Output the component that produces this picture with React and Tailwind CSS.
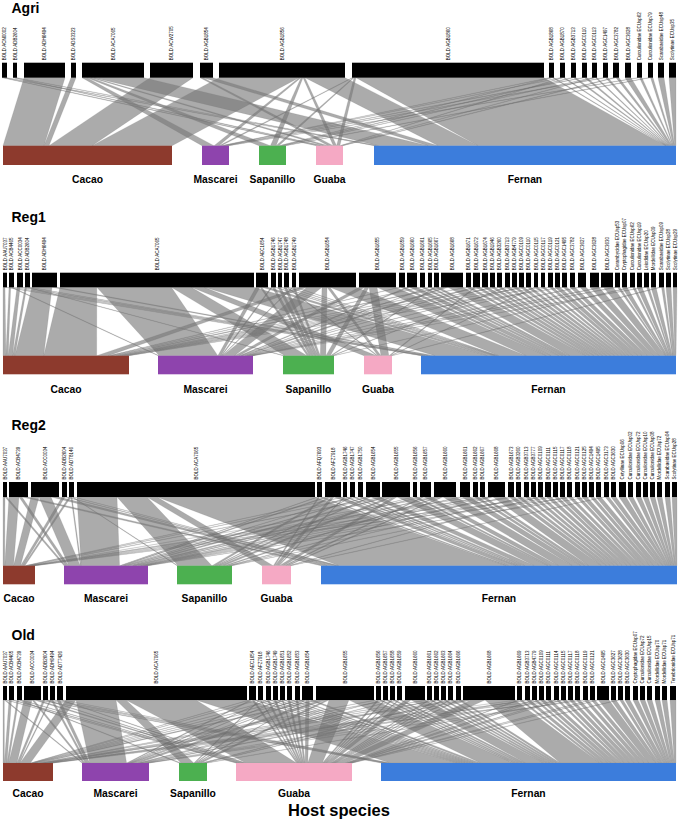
import React from "react";

const HOSTS = ["Cacao", "Mascarei", "Sapanillo", "Guaba", "Fernan"];
const HOST_COLORS = ["#8d3a2d", "#8e44ad", "#4cb050", "#f5a9c4", "#3c7ddc"];
const FONT = "'Liberation Sans', Arial, sans-serif";

function computeLinks(bars, hosts) {
  const tops = bars.map((b) => {
    const s = b[3].reduce((a, c) => a + c, 0);
    const sc = (b[1] - b[0]) / s;
    return b[3].map((v) => v * sc);
  });
  const col = [0, 0, 0, 0, 0];
  tops.forEach((t, i) => {
    const f = bars[i][4] ?? 1;
    t.forEach((v, j) => (col[j] += v * f));
  });
  const cur = hosts.map((h) => h[0]);
  const out = [];
  bars.forEach((b, i) => {
    const f = b[4] ?? 1;
    let x = b[0];
    tops[i].forEach((v, j) => {
      if (v <= 0) return;
      const bw = (v * f * (hosts[j][1] - hosts[j][0])) / col[j];
      out.push([x, x + v, cur[j], cur[j] + bw]);
      x += v;
      cur[j] += bw;
    });
  });
  return out;
}

function Panel({ title, h, titleY, barY, barH, hostY, hostH, labelY, bars, hosts }) {
  const links = computeLinks(bars, hosts);
  const y1 = barY + barH;
  return (
    <svg width="678" height={h} viewBox={`0 0 678 ${h}`} className="block shrink-0">
      <text x="11.5" y={titleY} fontFamily={FONT} fontWeight="bold" fontSize="14" fill="#000">
        {title}
      </text>
      {links.map((l, i) => (
        <polygon
          key={i}
          points={`${l[0]},${y1} ${l[1]},${y1} ${l[3]},${hostY} ${l[2]},${hostY}`}
          fill="#777777"
          fillOpacity="0.62"
          stroke="#6a6a6a"
          strokeOpacity="0.45"
          strokeWidth="0.35"
        />
      ))}
      {bars.map((b, i) => (
        <rect key={"b" + i} x={b[0]} y={barY} width={b[1] - b[0]} height={barH} fill="#000" />
      ))}
      {bars.map((b, i) => (
        <text
          key={"t" + i}
          transform={`translate(${(b[0] + b[1]) / 2 + 1.6},${barY - 2.5}) rotate(-90)`}
          fontFamily={FONT}
          fontSize="4.5"
          fill="#000"
        >
          {b[2]}
        </text>
      ))}
      {hosts.map((hs, j) => (
        <rect key={"h" + j} x={hs[0]} y={hostY} width={hs[1] - hs[0]} height={hostH} fill={HOST_COLORS[j]} />
      ))}
      {hosts.map((hs, j) => (
        <text
          key={"l" + j}
          x={(hs[0] + hs[1]) / 2}
          y={labelY}
          textAnchor="middle"
          fontFamily={FONT}
          fontWeight="bold"
          fontSize="10.3"
          fill="#000"
        >
          {HOSTS[j]}
        </text>
      ))}
    </svg>
  );
}

const AGRI_BARS = [
  [2, 7, "BOLD:ACN0002", [0, 0, 0, 1, 1]],
  [13, 17, "BOLD:ADB2604", [0, 0, 0, 1, 1]],
  [24, 65, "BOLD:ADH6494", [1, 0, 0, 0, 0]],
  [71, 76, "BOLD:ADS3323", [1, 0, 0, 0, 0]],
  [82, 144, "BOLD:ACA7065", [0, 5, 4, 3, 50]],
  [150, 193, "BOLD:ACW2705", [1, 0, 0, 0, 0]],
  [200, 213, "BOLD:AGB1854", [0, 0, 0, 3, 10]],
  [219, 345, "BOLD:AGB1856", [80, 2, 2, 2, 40]],
  [352, 544, "BOLD:AGB1860", [0, 1, 1, 2, 188]],
  [549, 554, "BOLD:AGB1868", [0, 1, 1, 0, 1], 0.3],
  [560, 565, "BOLD:AGB1870", [0, 1, 0, 1, 1], 0.3],
  [571, 576, "BOLD:AGB3713", [0, 0, 1, 0, 1], 0.3],
  [582, 587, "BOLD:AGC0110", [0, 1, 0, 0, 1], 0.3],
  [592, 597, "BOLD:AGC0113", [0, 0, 1, 1, 1], 0.3],
  [603, 608, "BOLD:AGC1497", [0, 1, 0, 0, 1], 0.3],
  [613, 619, "BOLD:AGC3782", [0, 0, 0, 1, 1], 0.3],
  [625, 631, "BOLD:AGC3628", [0, 0, 0, 0, 1], 0.3],
  [637, 642, "Curculionidae ECUsp62", [0, 1, 0, 0, 1], 0.3],
  [648, 653, "Curculionidae ECUsp79", [0, 0, 1, 0, 1], 0.3],
  [658, 664, "Scarabaeidae ECUsp48", [0, 0, 0, 0, 1], 0.2],
  [669, 676, "Scolytinae ECUsp35", [0, 0, 0, 0, 1], 0.2],
];
const AGRI_HOSTS = [[3, 172], [202, 229], [259, 286], [316, 343], [374, 676]];

const REG1_BARS = [
  [3, 7, "BOLD:AAU7037", [1, 0, 0, 0, 1]],
  [9, 14, "BOLD:ACB4465", [1, 1, 0, 0, 1]],
  [17, 23, "BOLD:ACC0034", [1, 0, 0, 0, 1]],
  [25, 30, "BOLD:ADB2604", [1, 0, 1, 0, 1]],
  [32, 57, "BOLD:ADH6494", [4, 0, 0, 0, 1]],
  [60, 254, "BOLD:ACA7065", [37, 75, 20, 13, 50]],
  [256, 268, "BOLD:AEC1654", [0, 4, 2, 0, 6]],
  [271, 276, "BOLD:AGB1746", [0, 1, 2, 0, 1]],
  [278, 282, "BOLD:AGB1747", [0, 0, 2, 0, 1]],
  [284, 289, "BOLD:AGB1748", [0, 0, 2, 1, 1]],
  [292, 296, "BOLD:AGB1749", [0, 1, 2, 0, 1]],
  [299, 356, "BOLD:AGB1654", [8, 15, 5, 3, 26]],
  [359, 396, "BOLD:AGB1655", [0, 6, 4, 8, 19]],
  [399, 405, "BOLD:AGB1659", [1, 0, 0, 0, 3]],
  [407, 417, "BOLD:AGB1660", [0, 2, 0, 0, 6]],
  [420, 425, "BOLD:AGB1661", [1, 0, 0, 0, 3]],
  [428, 432, "BOLD:AGB1665", [0, 1, 0, 0, 3]],
  [434, 439, "BOLD:AGB1667", [0, 0, 1, 0, 3]],
  [441, 463, "BOLD:AGB1668", [3, 4, 0, 0, 15]],
  [466, 471, "BOLD:AGB1671", [1, 0, 0, 0, 3]],
  [473, 480, "BOLD:AGB1672", [0, 1, 0, 1, 3]],
  [482, 488, "BOLD:AGB1674", [1, 0, 0, 0, 3]],
  [490, 495, "BOLD:AGB1946", [0, 1, 0, 0, 3]],
  [497, 502, "BOLD:AGB3260", [1, 0, 0, 0, 3]],
  [505, 510, "BOLD:AGB3713", [0, 0, 1, 0, 3]],
  [512, 517, "BOLD:AGB4779", [1, 0, 0, 0, 3]],
  [519, 524, "BOLD:AGC0109", [0, 1, 0, 0, 3]],
  [526, 531, "BOLD:AGC0110", [1, 0, 0, 0, 3]],
  [534, 538, "BOLD:AGC0115", [0, 0, 0, 1, 3]],
  [541, 545, "BOLD:AGC0117", [1, 0, 0, 0, 3]],
  [548, 553, "BOLD:AGC0119", [0, 1, 0, 0, 3]],
  [555, 560, "BOLD:AGC0121", [0, 0, 0, 0, 1]],
  [562, 567, "BOLD:AGC1495", [1, 0, 0, 0, 3]],
  [570, 575, "BOLD:AGC3782", [0, 0, 0, 0, 1]],
  [578, 586, "BOLD:AGC3627", [0, 1, 0, 0, 3]],
  [590, 599, "BOLD:AGC3628", [0, 0, 0, 0, 1], 0.6],
  [601, 613, "BOLD:AGC3630", [0, 1, 0, 0, 4], 0.6],
  [615, 620, "Cerambycidae ECUsp53", [0, 1, 0, 0, 1], 0.3],
  [622, 627, "Cryptophagidae ECUsp07", [0, 0, 0, 0, 1], 0.3],
  [630, 635, "Curculionidae ECUsp62", [0, 0, 1, 0, 1], 0.3],
  [637, 642, "Curculionidae ECUsp19", [0, 0, 0, 0, 1], 0.3],
  [644, 649, "Leiodidae ECUsp20", [0, 1, 0, 0, 1], 0.3],
  [651, 656, "Mordellidae ECUsp09", [0, 0, 0, 0, 1], 0.3],
  [659, 664, "Scarabaeidae ECUsp09", [0, 0, 0, 1, 1], 0.3],
  [666, 671, "Scolytinae ECUsp28", [0, 0, 0, 0, 1], 0.3],
  [673, 677, "Scolytinae ECUsp29", [0, 0, 0, 0, 1], 0.3],
];
const REG1_HOSTS = [[3, 129], [158, 253], [283, 334], [364, 392], [421, 676]];

const REG2_BARS = [
  [3, 7, "BOLD:AAU7037", [1, 1, 0, 0, 0]],
  [9, 28, "BOLD:ACB4739", [10, 3, 0, 0, 6]],
  [31, 59, "BOLD:ACC0034", [8, 12, 0, 0, 8]],
  [62, 67, "BOLD:ADB2604", [3, 0, 0, 0, 2]],
  [69, 74, "BOLD:ADT8146", [2, 1, 1, 0, 1]],
  [77, 315, "BOLD:ACA7065", [0, 40, 30, 10, 158]],
  [317, 322, "BOLD:AFQ7693", [0, 1, 0, 1, 2]],
  [325, 341, "BOLD:AFZ7918", [0, 3, 3, 3, 7]],
  [343, 347, "BOLD:AGB1746", [1, 0, 0, 1, 2]],
  [350, 355, "BOLD:AGB1747", [0, 1, 1, 0, 2]],
  [358, 363, "BOLD:AGB1750", [1, 0, 0, 0, 3]],
  [366, 380, "BOLD:AGB1654", [0, 3, 2, 0, 9]],
  [382, 410, "BOLD:AGB1655", [2, 5, 4, 4, 13]],
  [413, 417, "BOLD:AGB1656", [0, 1, 0, 0, 3]],
  [420, 431, "BOLD:AGB1657", [0, 2, 0, 2, 7]],
  [434, 456, "BOLD:AGB1660", [1, 3, 3, 2, 13]],
  [460, 470, "BOLD:AGB1661", [0, 2, 0, 0, 8]],
  [473, 478, "BOLD:AGB1662", [1, 0, 0, 0, 3]],
  [480, 485, "BOLD:AGB1667", [0, 1, 0, 0, 3]],
  [488, 505, "BOLD:AGB1668", [1, 2, 2, 0, 12]],
  [508, 514, "BOLD:AGB1673", [0, 1, 0, 0, 4]],
  [516, 521, "BOLD:AGB3260", [1, 0, 0, 0, 3]],
  [524, 529, "BOLD:AGB3713", [0, 0, 1, 0, 3]],
  [531, 536, "BOLD:AGB3777", [0, 1, 0, 0, 3]],
  [538, 543, "BOLD:AGC0109", [0, 0, 0, 1, 3]],
  [545, 551, "BOLD:AGC0111", [1, 0, 0, 0, 3]],
  [553, 558, "BOLD:AGC0115", [0, 1, 0, 0, 3]],
  [560, 565, "BOLD:AGC0117", [0, 0, 0, 0, 1]],
  [567, 572, "BOLD:AGC0118", [0, 0, 1, 0, 3]],
  [575, 580, "BOLD:AGC0121", [1, 0, 0, 0, 3]],
  [582, 587, "BOLD:AGC0125", [0, 0, 0, 0, 1]],
  [589, 594, "BOLD:AGC1494", [0, 1, 0, 0, 3]],
  [596, 601, "BOLD:AGC1495", [0, 0, 0, 0, 1]],
  [604, 609, "BOLD:AGC3173", [0, 0, 0, 1, 3]],
  [611, 616, "BOLD:AGC3630", [0, 0, 0, 0, 1], 0.6],
  [619, 626, "Cetyllinae ECUsp06", [0, 0, 0, 0, 1], 0.25],
  [628, 633, "Curculionidae ECUsp02", [0, 0, 0, 0, 1], 0.25],
  [636, 641, "Curculionidae ECUsp72", [0, 0, 0, 0, 1], 0.25],
  [643, 648, "Curculionidae ECUsp10", [0, 0, 0, 0, 1], 0.25],
  [650, 655, "Curculionidae ECUsp08", [0, 0, 0, 0, 1], 0.25],
  [657, 662, "Mordellidae ECUsp72", [0, 0, 0, 0, 1], 0.25],
  [665, 670, "Scarabaeidae ECUsp04", [0, 0, 0, 0, 1], 0.25],
  [672, 677, "Scolytinae ECUsp28", [0, 0, 0, 0, 1], 0.25],
];
const REG2_HOSTS = [[3, 35], [64, 148], [177, 232], [262, 291], [321, 677]];

const OLD_BARS = [
  [3, 7, "BOLD:AAU7037", [1, 1, 0, 1, 0]],
  [9, 14, "BOLD:ACB4465", [1, 0, 0, 1, 0]],
  [17, 22, "BOLD:ACB4739", [1, 0, 1, 1, 0]],
  [24, 41, "BOLD:ACC0034", [8, 2, 0, 4, 3]],
  [43, 48, "BOLD:ADB2604", [2, 0, 0, 2, 1]],
  [50, 55, "BOLD:ADH6494", [1, 2, 0, 0, 2]],
  [57, 63, "BOLD:ADT7426", [0, 3, 0, 2, 1]],
  [66, 247, "BOLD:ACA7065", [10, 40, 10, 70, 51]],
  [249, 256, "BOLD:AEC1654", [1, 2, 0, 2, 2]],
  [258, 263, "BOLD:AFZ7918", [1, 0, 1, 1, 2]],
  [266, 271, "BOLD:AGB1746", [0, 1, 0, 2, 2]],
  [273, 278, "BOLD:AGB1749", [1, 0, 0, 2, 2]],
  [280, 285, "BOLD:AGB1651", [0, 1, 1, 1, 2]],
  [287, 292, "BOLD:AGB1652", [1, 0, 0, 2, 2]],
  [295, 300, "BOLD:AGB1653", [0, 1, 0, 2, 2]],
  [302, 313, "BOLD:AGB1654", [1, 2, 1, 4, 4]],
  [316, 374, "BOLD:AGB1655", [4, 6, 3, 20, 25]],
  [376, 381, "BOLD:AGB1656", [1, 0, 0, 2, 2]],
  [383, 388, "BOLD:AGB1657", [0, 1, 0, 1, 2]],
  [390, 395, "BOLD:AGB1658", [1, 0, 0, 1, 2]],
  [397, 402, "BOLD:AGB1659", [0, 1, 0, 1, 2]],
  [405, 425, "BOLD:AGB1660", [0, 0, 0, 6, 14]],
  [427, 432, "BOLD:AGB1661", [1, 0, 0, 1, 2]],
  [434, 439, "BOLD:AGB1662", [0, 1, 0, 1, 2]],
  [441, 446, "BOLD:AGB1663", [1, 0, 0, 1, 2]],
  [448, 453, "BOLD:AGB1664", [0, 0, 1, 1, 2]],
  [456, 461, "BOLD:AGB1666", [1, 0, 0, 1, 2]],
  [463, 515, "BOLD:AGB1668", [2, 4, 2, 14, 30]],
  [517, 522, "BOLD:AGB1669", [1, 0, 0, 1, 2]],
  [525, 530, "BOLD:AGB3713", [0, 1, 0, 0, 3]],
  [532, 537, "BOLD:AGB4779", [1, 0, 0, 1, 2]],
  [539, 544, "BOLD:AGC0109", [0, 0, 0, 1, 3]],
  [546, 551, "BOLD:AGC0111", [1, 0, 0, 0, 3]],
  [554, 559, "BOLD:AGC0114", [0, 1, 0, 1, 2]],
  [561, 566, "BOLD:AGC0115", [0, 0, 0, 1, 3]],
  [568, 573, "BOLD:AGC0117", [1, 0, 0, 0, 3]],
  [575, 580, "BOLD:AGC0118", [0, 0, 1, 0, 3]],
  [583, 588, "BOLD:AGC0119", [0, 1, 0, 0, 3]],
  [590, 595, "BOLD:AGC0121", [0, 0, 0, 1, 3]],
  [597, 609, "BOLD:AGC1495", [0, 0, 0, 1, 8], 0.5],
  [611, 616, "BOLD:AGC3627", [0, 0, 0, 0, 1], 0.5],
  [618, 623, "BOLD:AGC3628", [0, 0, 0, 1, 2], 0.5],
  [625, 630, "BOLD:AGC3630", [0, 0, 0, 0, 1], 0.5],
  [633, 638, "Cryptophagidae ECUsp07", [0, 0, 0, 0, 1], 0.3],
  [640, 645, "Curculionidae ECUsp72", [0, 0, 0, 0, 1], 0.3],
  [647, 652, "Curculionidae ECUsp15", [0, 0, 0, 0, 1], 0.3],
  [655, 660, "Mordellidae ECUsp70", [0, 0, 0, 0, 1], 0.3],
  [662, 667, "Mordellidae ECUsp71", [0, 0, 0, 0, 1], 0.3],
  [670, 676, "Tenebrionidae ECUsp71", [0, 0, 0, 0, 1], 0.2],
];
const OLD_HOSTS = [[3, 53], [82, 149], [179, 207], [236, 352], [381, 676]];

export default function App() {
  return (
    <div className="w-[678px] h-[820px] bg-white flex flex-col overflow-hidden">
      <Panel title="Agri" h={190} titleY={13} barY={62.7} barH={15} hostY={145.7} hostH={19.3} labelY={183} bars={AGRI_BARS} hosts={AGRI_HOSTS} />
      <Panel title="Reg1" h={210} titleY={32} barY={82.7} barH={14.6} hostY={165.7} hostH={18.6} labelY={203} bars={REG1_BARS} hosts={REG1_HOSTS} />
      <Panel title="Reg2" h={210} titleY={30} barY={82} barH={15} hostY={165.7} hostH={18.6} labelY={202} bars={REG2_BARS} hosts={REG2_HOSTS} />
      <Panel title="Old" h={190} titleY={30} barY={76} barH={14} hostY={153} hostH={18} labelY={187} bars={OLD_BARS} hosts={OLD_HOSTS} />
      <div className="h-[20px] shrink-0 text-center font-bold text-[16.5px] leading-[20px] text-black font-['Liberation_Sans',Arial,sans-serif]">
        Host species
      </div>
    </div>
  );
}
